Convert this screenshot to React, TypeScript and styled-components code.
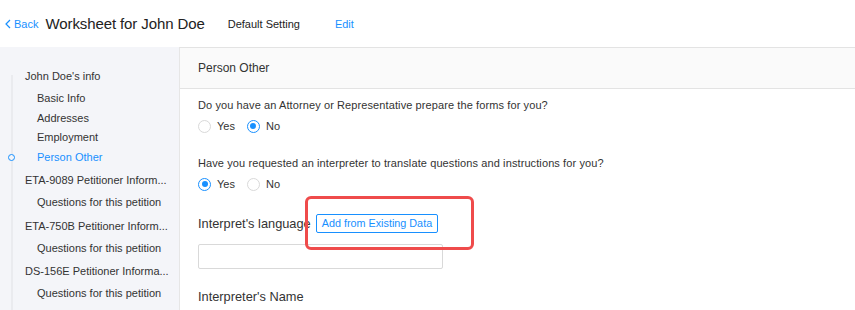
import React from 'react';
import styled, {createGlobalStyle} from 'styled-components';

const GlobalStyle = createGlobalStyle`
  html, body {
    margin: 0;
    padding: 0;
    background: #fff;
    font-family: "Liberation Sans", Arial, sans-serif;
    color: #333;
    overflow: hidden;
  }
`

const Page = styled.div`
  width: 855px;
  height: 310px;
  display: flex;
  flex-direction: column;
`

const TopBar = styled.div`
  height: 47px;
  display: flex;
  align-items: center;
  padding-left: 5px;
  box-sizing: border-box;
`

const BackLink = styled.a`
  display: flex;
  align-items: center;
  gap: 3px;
  color: #1890ff;
  font-size: 11px;
  margin-right: 7px;
`

const Title = styled.h1`
  margin: 0 23px 0 0;
  font-size: 15px;
  font-weight: 500;
  color: #222;
  letter-spacing: -0.1px;
`

const Setting = styled.span`
  font-size: 11px;
  color: #222;
  margin-right: 35px;
`

const EditLink = styled.a`
  font-size: 11px;
  color: #1890ff;
`

const Body = styled.div`
  flex: 1;
  display: flex;
  min-height: 0;
`

const Sidebar = styled.nav`
  width: 179px;
  flex-shrink: 0;
  background: #f4f5f9;
  padding-top: 19px;
  box-sizing: border-box;
  position: relative;

  &::before {
    content: '';
    position: absolute;
    left: 11px;
    top: 28px;
    bottom: 0;
    width: 2px;
    background: #eaebef;
  }
`

const Group = styled.div`
  margin-bottom: 3px;
`

const ParentItem = styled.div`
  height: 20px;
  line-height: 20px;
  padding-left: 25px;
  padding-right: 10px;
  margin-bottom: 3px;
  font-size: 11px;
  color: #333;
  white-space: nowrap;
  overflow: hidden;
  text-overflow: ellipsis;
`

const ChildItem = styled.div<{ $active?: boolean }>`
  height: 19.5px;
  line-height: 19.5px;
  padding-left: 37px;
  font-size: 11px;
  color: ${({$active}) => $active ? '#1890ff' : '#333'};
  position: relative;
  white-space: nowrap;

  ${({$active}) => $active && `
    &::before {
      content: '';
      position: absolute;
      left: 8px;
      top: 6px;
      width: 5px;
      height: 5px;
      border: 1.5px solid #1890ff;
      border-radius: 50%;
      background: #f4f5f9;
    }
  `}
`

const Main = styled.main`
  flex: 1;
  border-left: 1px solid #e6e6e6;
  border-top: 1px solid #e3e3e3;
  display: flex;
  flex-direction: column;
`

const PanelHeader = styled.div`
  height: 40px;
  display: flex;
  align-items: center;
  padding-left: 18px;
  background: #fafafa;
  border-bottom: 1px solid #e3e3e3;
  font-size: 12px;
  color: #333;
`

const Content = styled.div`
  padding: 7px 18px 0;
  position: relative;
`

const Question = styled.div<{ $gap?: number }>`
  font-size: 11px;
  line-height: 18px;
  color: #333;
  margin-top: ${({$gap}) => $gap ?? 0}px;
  letter-spacing: 0.1px;
`

const RadioRow = styled.div`
  display: flex;
  align-items: center;
  height: 20px;
  margin-top: 2px;
  gap: 12px;
`

const RadioOption = styled.label`
  display: flex;
  align-items: center;
  gap: 6px;
  font-size: 11px;
  color: #333;
`

const RadioDot = styled.span<{ $checked?: boolean }>`
  width: 11px;
  height: 11px;
  border-radius: 50%;
  border: 1px solid ${({$checked}) => $checked ? '#1890ff' : '#d9d9d9'};
  background: #fff;
  display: flex;
  align-items: center;
  justify-content: center;

  &::after {
    content: '';
    width: 6px;
    height: 6px;
    border-radius: 50%;
    background: ${({$checked}) => $checked ? '#1890ff' : 'transparent'};
  }
`

const FieldLabel = styled.div<{ $gap: number }>`
  display: flex;
  align-items: center;
  height: 20px;
  margin-top: ${({$gap}) => $gap}px;
  font-size: 12.8px;
  color: #333;
  position: relative;
`

const SmallButton = styled.button`
  margin-left: 5px;
  height: 19px;
  padding: 0 5px;
  border: 1px solid #1890ff;
  border-radius: 2px;
  background: #fff;
  color: #1890ff;
  font-family: "Liberation Sans", Arial, sans-serif;
  font-size: 10.8px;
`

const Highlight = styled.div`
  position: absolute;
  left: 107px;
  top: -17px;
  width: 169px;
  height: 54px;
  box-sizing: border-box;
  border: 3px solid #ef4b4b;
  border-radius: 6px;
  pointer-events: none;
`

const TextInput = styled.input`
  display: block;
  margin-top: 11px;
  width: 245px;
  height: 25px;
  box-sizing: border-box;
  border: 1px solid #d9d9d9;
  border-radius: 2px;
`

type Opt = { label: string; checked: boolean }

const Radios = ({options}: { options: Opt[] }) => (
  <RadioRow>
    {options.map(o => (
      <RadioOption key={o.label}>
        <RadioDot $checked={o.checked}/>
        {o.label}
      </RadioOption>
    ))}
  </RadioRow>
)

const nav = [
  {title: "John Doe's info", children: ['Basic Info', 'Addresses', 'Employment', 'Person Other']},
  {title: 'ETA-9089 Petitioner Inform...', children: ['Questions for this petition']},
  {title: 'ETA-750B Petitioner Inform...', children: ['Questions for this petition']},
  {title: 'DS-156E Petitioner Informa...', children: ['Questions for this petition']},
]

export default function App() {
  return (
    <Page>
      <GlobalStyle/>
      <TopBar>
        <BackLink>
          <svg width="6" height="10" viewBox="0 0 6 10">
            <path d="M5 1 L1 5 L5 9" fill="none" stroke="#1890ff" strokeWidth="1.2"/>
          </svg>
          Back
        </BackLink>
        <Title>Worksheet for John Doe</Title>
        <Setting>Default Setting</Setting>
        <EditLink>Edit</EditLink>
      </TopBar>
      <Body>
        <Sidebar>
          {nav.map(g => (
            <Group key={g.title}>
              <ParentItem>{g.title}</ParentItem>
              {g.children.map(c => (
                <ChildItem key={c} $active={c === 'Person Other'}>{c}</ChildItem>
              ))}
            </Group>
          ))}
        </Sidebar>
        <Main>
          <PanelHeader>Person Other</PanelHeader>
          <Content>
            <Question>Do you have an Attorney or Representative prepare the forms for you?</Question>
            <Radios options={[{label: 'Yes', checked: false}, {label: 'No', checked: true}]}/>
            <Question $gap={18}>Have you requested an interpreter to translate questions and instructions for you?</Question>
            <Radios options={[{label: 'Yes', checked: true}, {label: 'No', checked: false}]}/>
            <FieldLabel $gap={19}>
              Interpret's language
              <SmallButton>Add from Existing Data</SmallButton>
              <Highlight/>
            </FieldLabel>
            <TextInput/>
            <FieldLabel $gap={17}>Interpreter's Name</FieldLabel>
          </Content>
        </Main>
      </Body>
    </Page>
  );
}
